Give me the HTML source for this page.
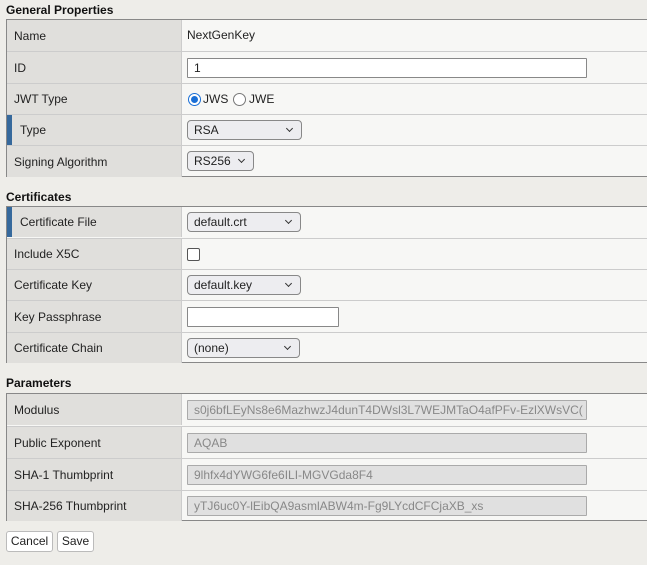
<!DOCTYPE html>
<html><head><style>
body{margin:0;width:647px;height:565px;background:#eeede9;font-family:"Liberation Sans",Arial,sans-serif;font-size:12px;color:#222;position:relative;overflow:hidden}
.h{position:absolute;left:6px;font-weight:bold;font-size:12px;color:#111}
.t{position:absolute;left:6px;right:-2px;border:1px solid #888;background:#f7f7f5}
.r{position:absolute;left:0;right:0;border-top:1px solid #ccc}
.r:first-child{border-top:none}
.l{position:absolute;left:0;top:0;bottom:0;width:174px;background:#e0dfdc;border-right:1px solid #ccc}
.l span{position:absolute;left:7px;top:50%;transform:translateY(-50%)}
.bar{position:absolute;left:0;top:0;bottom:0;width:5px;background:#36699c}
.v{position:absolute;left:175px;right:0;top:0;bottom:0}
.in{position:absolute;left:5px;height:18px;border:1px solid #888;background:#fff;box-sizing:content-box;border-radius:1px;line-height:18px;padding-left:6px}
.ro{background:#e0e0e0;color:#888;border-color:#aaa;overflow:hidden;white-space:nowrap}
.sel{position:absolute;left:5px;height:18px;border:1px solid #888;border-radius:4px;background:#ededf0;line-height:18px;padding-left:6px;box-sizing:content-box}
.sel:after{content:"";position:absolute;right:9px;top:5px;width:4px;height:4px;border-right:1.3px solid #333;border-bottom:1.3px solid #333;transform:rotate(45deg)}
.btn{position:absolute;top:531px;height:19px;border:1px solid #bbb;border-radius:3px;background:#fff;line-height:19px;text-align:center;font-size:12px}
</style></head><body>
<div class="h" style="top:3px">General Properties</div>
<div class="t" style="top:19px;height:156px">
 <div class="r" style="top:0;height:31px"><div class="l"><span>Name</span></div><div class="v"><span style="position:absolute;left:5px;top:8px">NextGenKey</span></div></div>
 <div class="r" style="top:31px;height:31px"><div class="l"><span>ID</span></div><div class="v"><div class="in" style="top:6px;width:392px">1</div></div></div>
 <div class="r" style="top:63px;height:30px"><div class="l"><span>JWT Type</span></div><div class="v">
  <span style="position:absolute;left:6px;top:9px;width:11px;height:11px;border:1px solid #1a6fd6;border-radius:50%;background:#fff"><span style="position:absolute;left:2px;top:2px;width:7px;height:7px;border-radius:50%;background:#1a6fd6"></span></span>
  <span style="position:absolute;left:21px;top:8px">JWS</span>
  <span style="position:absolute;left:51px;top:9px;width:11px;height:11px;border:1px solid #777;border-radius:50%;background:#fff"></span>
  <span style="position:absolute;left:67px;top:8px">JWE</span></div></div>
 <div class="r" style="top:94px;height:30px"><div class="l"><div class="bar"></div><span style="left:13px">Type</span></div><div class="v"><div class="sel" style="top:5px;width:107px">RSA</div></div></div>
 <div class="r" style="top:125px;height:31px"><div class="l"><span>Signing Algorithm</span></div><div class="v"><div class="sel" style="top:5px;width:59px">RS256</div></div></div>
</div>
<div class="h" style="top:190px">Certificates</div>
<div class="t" style="top:206px;height:155px">
 <div class="r" style="top:0;height:30px"><div class="l"><div class="bar"></div><span style="left:13px">Certificate File</span></div><div class="v"><div class="sel" style="top:5px;width:106px">default.crt</div></div></div>
 <div class="r" style="top:31px;height:30px"><div class="l"><span>Include X5C</span></div><div class="v"><span style="position:absolute;left:5px;top:9px;width:11px;height:11px;border:1.5px solid #555;border-radius:2px;background:#fff"></span></div></div>
 <div class="r" style="top:62px;height:30px"><div class="l"><span>Certificate Key</span></div><div class="v"><div class="sel" style="top:5px;width:106px">default.key</div></div></div>
 <div class="r" style="top:93px;height:31px"><div class="l"><span>Key Passphrase</span></div><div class="v"><div class="in" style="top:6px;width:144px"></div></div></div>
 <div class="r" style="top:125px;height:30px"><div class="l"><span>Certificate Chain</span></div><div class="v"><div class="sel" style="top:5px;width:105px">(none)</div></div></div>
</div>
<div class="h" style="top:376px">Parameters</div>
<div class="t" style="top:393px;height:126px">
 <div class="r" style="top:0;height:31px"><div class="l"><span>Modulus</span></div><div class="v"><div class="in ro" style="top:6px;width:392px">s0j6bfLEyNs8e6MazhwzJ4dunT4DWsl3L7WEJMTaO4afPFv-EzlXWsVC(</div></div></div>
 <div class="r" style="top:32px;height:31px"><div class="l"><span>Public Exponent</span></div><div class="v"><div class="in ro" style="top:6px;width:392px">AQAB</div></div></div>
 <div class="r" style="top:64px;height:31px"><div class="l"><span>SHA-1 Thumbprint</span></div><div class="v"><div class="in ro" style="top:6px;width:392px">9lhfx4dYWG6fe6ILI-MGVGda8F4</div></div></div>
 <div class="r" style="top:96px;height:30px"><div class="l"><span>SHA-256 Thumbprint</span></div><div class="v"><div class="in ro" style="top:5px;width:392px">yTJ6uc0Y-lEibQA9asmlABW4m-Fg9LYcdCFCjaXB_xs</div></div></div>
</div>
<div class="btn" style="left:6px;width:45px">Cancel</div>
<div class="btn" style="left:57px;width:35px">Save</div>
</body></html>
